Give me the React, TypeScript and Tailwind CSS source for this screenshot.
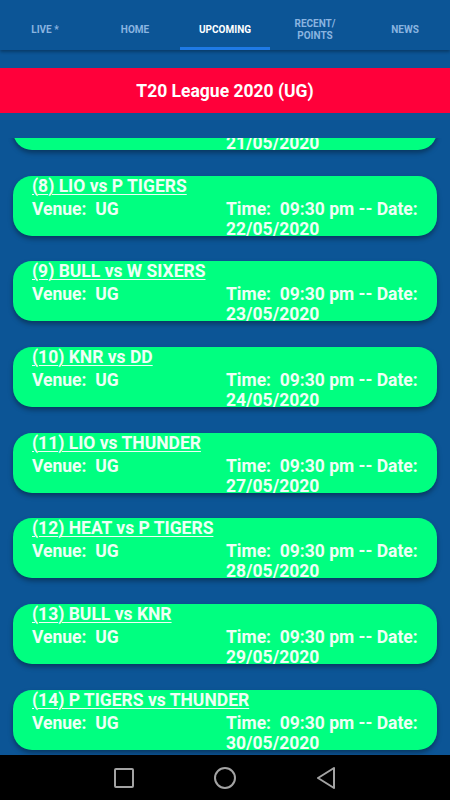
const tabs = [
  { label: 'LIVE *' },
  { label: 'HOME' },
  { label: 'UPCOMING', active: true },
  { label: 'RECENT/\nPOINTS' },
  { label: 'NEWS' },
];

const matches = [
  { title: '(7) HEAT vs DD', date: '21/05/2020' },
  { title: '(8) LIO vs P TIGERS', date: '22/05/2020' },
  { title: '(9) BULL vs W SIXERS', date: '23/05/2020' },
  { title: '(10) KNR vs DD', date: '24/05/2020' },
  { title: '(11) LIO vs THUNDER', date: '27/05/2020' },
  { title: '(12) HEAT vs P TIGERS', date: '28/05/2020' },
  { title: '(13) BULL vs KNR', date: '29/05/2020' },
  { title: '(14) P TIGERS vs THUNDER', date: '30/05/2020' },
  { title: '(15) KNR vs W SIXERS', date: '31/05/2020' },
];

const MatchCard = ({ title, date }: { title: string; date: string }) => (
  <div className="h-[60px] shrink-0 overflow-hidden rounded-[19px] bg-[#00ff80] pl-[19px] pr-[10px] text-[17.5px] font-bold leading-[20px] text-[#effff6] shadow-[0_3px_5px_rgba(0,0,0,0.35)]">
    <div className="underline decoration-1 underline-offset-2">{title}</div>
    <div className="mt-[3px] flex">
      <div className="w-[194px] shrink-0">Venue:&nbsp; UG</div>
      <div className="flex-1">Time:&nbsp; 09:30 pm -- Date: {date}</div>
    </div>
  </div>
);

export default function App() {
  return (
    <div
      className="flex h-[800px] w-[450px] flex-col overflow-hidden bg-[#0c5596]"
      style={{ fontFamily: 'Roboto, "Liberation Sans", sans-serif' }}
    >
      <div className="relative z-10 flex h-[50px] shrink-0 shadow-[0_2px_3px_rgba(0,0,0,0.3)]">
        {tabs.map((t) => (
          <div key={t.label} className="relative flex flex-1 items-center justify-center pt-[10px]">
            <span
              className={
                'whitespace-pre text-center text-[10px] font-bold leading-[12px] ' +
                (t.active ? 'text-white' : 'text-[#8ab4e0]')
              }
            >
              {t.label}
            </span>
            {t.active && <div className="absolute bottom-0 left-0 right-0 h-[3px] bg-[#1f7ae6]" />}
          </div>
        ))}
      </div>

      <div className="mt-[18px] flex h-[45px] shrink-0 items-center justify-center bg-[#ff003a] pt-[2px] text-[17.5px] font-bold text-white">
        T20 League 2020 (UG)
      </div>

      <div className="mt-[25px] flex-1 overflow-hidden">
        <div className="-mt-[48px] flex flex-col gap-[25.7px] px-[13px]">
          {matches.map((m) => (
            <MatchCard key={m.title} title={m.title} date={m.date} />
          ))}
        </div>
      </div>

      <div className="flex h-[45px] shrink-0 items-center justify-center gap-[80px] bg-black">
        <svg width="20" height="20" viewBox="0 0 20 20">
          <rect x="1" y="1" width="18" height="18" rx="1" fill="none" stroke="#a3a3a3" strokeWidth="2" />
        </svg>
        <svg width="22" height="22" viewBox="0 0 22 22">
          <circle cx="11" cy="11" r="10" fill="none" stroke="#a3a3a3" strokeWidth="2" />
        </svg>
        <svg width="20" height="22" viewBox="0 0 20 22">
          <path d="M18 1 L2 11 L18 21 Z" fill="none" stroke="#a3a3a3" strokeWidth="2" strokeLinejoin="round" />
        </svg>
      </div>
    </div>
  );
}
